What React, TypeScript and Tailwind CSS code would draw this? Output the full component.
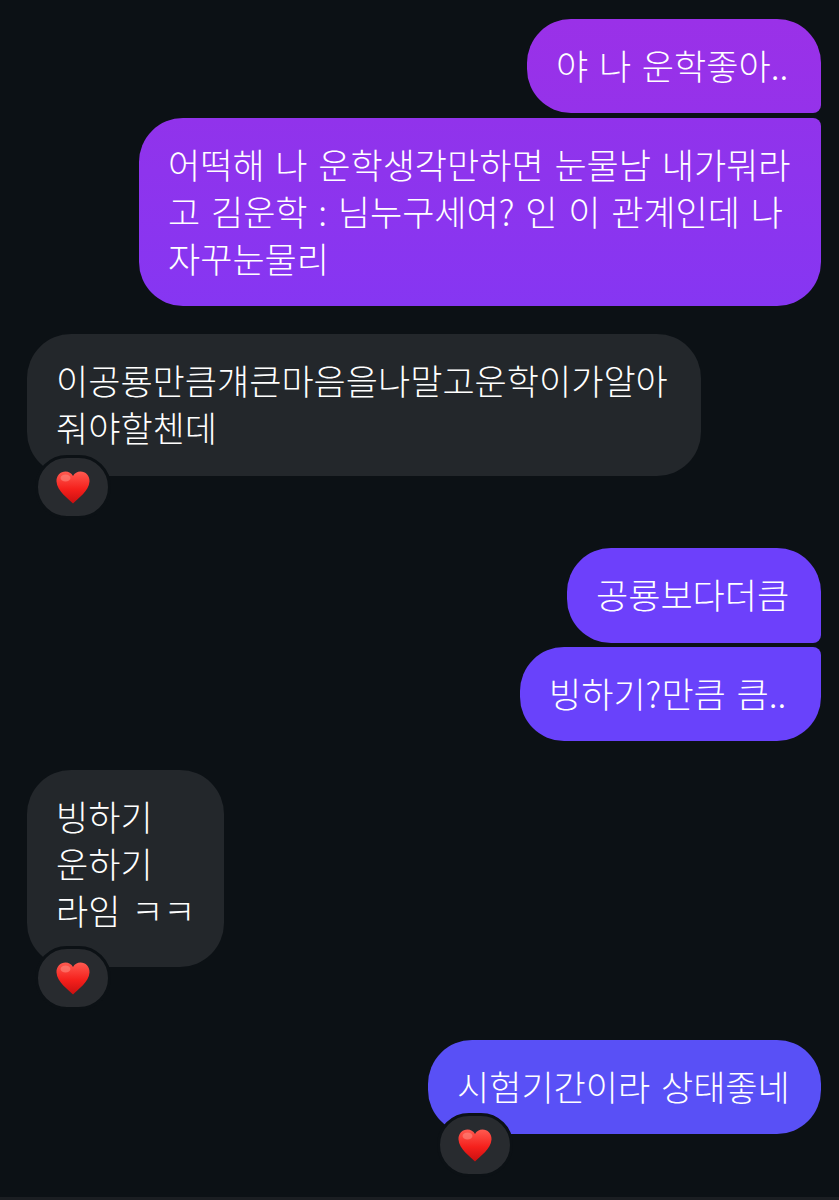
import type { ReactNode } from 'react'

const FONT = 'font-["Noto_Sans_CJK_KR","Noto_Sans",sans-serif]'

function Heart() {
  return (
    <svg width="34" height="33" viewBox="0 0 34 33">
      <defs>
        <linearGradient id="heartFill" x1="0" y1="0" x2="0" y2="1">
          <stop offset="0" stopColor="#ff5a50" />
          <stop offset="0.55" stopColor="#f5201c" />
          <stop offset="1" stopColor="#c90f10" />
        </linearGradient>
      </defs>
      <path
        d="M17 32.5C12 27.5 1 20 .5 10.5.2 4.5 4.5.5 9.5.5c3.2 0 6 1.700 7.500 4.500C18.500 2.200 21.300.5 24.500.5c5 0 9.300 4 9 10C33 20 22 27.500 17 32.500Z"
        fill="url(#heartFill)"
      />
      <ellipse cx="9.500" cy="7" rx="5" ry="3.500" fill="#ff8f85" opacity="0.55" />
    </svg>
  )
}

function Reaction({ className }: { className: string }) {
  return (
    <div className={`absolute flex h-[64px] w-[76px] items-center justify-center rounded-[32px] border-[3px] border-[#0c1115] bg-[#282b2f] ${className}`}>
      <Heart />
    </div>
  )
}

function Bubble({ className, children }: { className: string; children: ReactNode }) {
  return (
    <div className={`relative px-[29px] pt-[22px] text-[35px] leading-[47px] [word-spacing:3px] whitespace-nowrap text-white ${className}`}>
      {children}
    </div>
  )
}

export default function App() {
  return (
    <div className={`${FONT} flex h-[1200px] w-[839px] flex-col overflow-hidden bg-[#0c1115] font-light`}>
      <div className="flex-1 px-[18px] pt-[19px]">
        {/* first group */}
        <div className="flex flex-col items-end gap-[5px]">
          <Bubble className="h-[94px] w-[294px] rounded-[44px] rounded-br-[8px] bg-gradient-to-b from-[#9a31e8] to-[#9532ea]">야 나 운학좋아..</Bubble>
          <Bubble className="h-[188px] w-[682px] rounded-[44px] rounded-tr-[8px] bg-gradient-to-b from-[#9133eb] to-[#8636f2]">
            어떡해 나 운학생각만하면 눈물남 내가뭐라
            <br />
            고 김운학 : 님누구세여? 인 이 관계인데 나
            <br />
            자꾸눈물리
          </Bubble>
        </div>

        <div className="mt-[28px] ml-[9px]">
          <Bubble className="h-[142px] w-[674px] rounded-[44px] bg-[#23272b]">
            이공룡만큼걔큰마음을나말고운학이가알아
            <br />
            줘야할첸데
            <Reaction className="top-[121px] left-[8px]" />
          </Bubble>
        </div>

        <div className="mt-[72px] flex flex-col items-end gap-[4px]">
          <Bubble className="h-[95px] w-[254px] rounded-[44px] rounded-br-[8px] bg-[#6d40fb]">공룡보다더큼</Bubble>
          <Bubble className="h-[94px] w-[301px] rounded-[44px] rounded-tr-[8px] bg-[#6942fb]">빙하기?만큼 큼..</Bubble>
        </div>

        <div className="mt-[29px] ml-[9px]">
          <Bubble className="h-[197px] w-[197px] rounded-[44px] bg-[#23272b]">
            빙하기
            <br />
            운하기
            <br />
            라임 ㅋㅋ
            <Reaction className="top-[176px] left-[8px]" />
          </Bubble>
        </div>

        <div className="mt-[73px] flex justify-end">
          <Bubble className="h-[94px] w-[393px] rounded-[44px] bg-[#5950f6]">
            시험기간이라 상태좋네
            <Reaction className="top-[73px] left-[9px]" />
          </Bubble>
        </div>
      </div>
      {/* thin lighter strip along the bottom edge */}
      <div className="h-[3px] bg-[#1b1e22]" />
    </div>
  )
}
